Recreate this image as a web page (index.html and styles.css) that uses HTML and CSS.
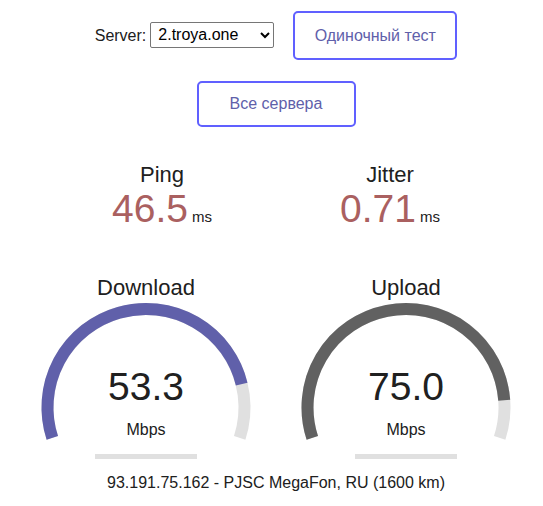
FILE: index.html
```html
<!DOCTYPE html>
<html>
<head>
<meta charset="utf-8">
<link rel="stylesheet" href="styles.css">
</head>
<body>
<div class="page">
  <div class="server-row">
    <label class="server-label">Server:</label>
    <select class="server-select"><option>2.troya.one</option></select>
    <button class="btn btn-single">Одиночный тест</button>
  </div>
  <div class="all-row">
    <button class="btn btn-all">Все сервера</button>
  </div>
  <div class="small-row">
    <div class="small-area">
      <div class="small-name">Ping</div>
      <div class="small-value"><span class="ping-num">46.5</span><span class="small-unit">ms</span></div>
    </div>
    <div class="small-area">
      <div class="small-name">Jitter</div>
      <div class="small-value"><span class="ping-num">0.71</span><span class="small-unit">ms</span></div>
    </div>
  </div>
  <div class="gauge-row">
    <div class="gauge">
      <svg class="gauge-svg" width="256" height="190" viewBox="0 0 256 190">
        <path d="M34.32 167.94 A98.5 98.5 0 1 1 221.68 167.94" fill="none" stroke="#e0e0e0" stroke-width="12"/>
        <path d="M34.32 167.94 A98.5 98.5 0 1 1 223.67 114.09" fill="none" stroke="#6060aa" stroke-width="12"/>
        <rect x="77" y="184" width="102" height="5" fill="#e0e0e0"/>
      </svg>
      <div class="gauge-name">Download</div>
      <div class="gauge-value">53.3</div>
      <div class="gauge-unit">Mbps</div>
    </div>
    <div class="gauge">
      <svg class="gauge-svg" width="256" height="190" viewBox="0 0 256 190">
        <path d="M34.32 167.94 A98.5 98.5 0 1 1 221.68 167.94" fill="none" stroke="#e0e0e0" stroke-width="12"/>
        <path d="M34.32 167.94 A98.5 98.5 0 1 1 226.23 130.2" fill="none" stroke="#616161" stroke-width="12"/>
        <rect x="77" y="184" width="102" height="5" fill="#e0e0e0"/>
      </svg>
      <div class="gauge-name">Upload</div>
      <div class="gauge-value">75.0</div>
      <div class="gauge-unit">Mbps</div>
    </div>
  </div>
  <div class="ip-info">93.191.75.162 - PJSC MegaFon, RU (1600 km)</div>
</div>
</body>
</html>
```

FILE: styles.css
```css
html, body {
  margin: 0;
  padding: 0;
  background: #ffffff;
}
body {
  font-family: "Liberation Sans", Arial, sans-serif;
  font-size: 16px;
  color: #202020;
}
.page {
  width: 534px;
  padding-left: 9px;
  display: flex;
  flex-direction: column;
  align-items: center;
}
.server-row {
  margin-top: 11px;
  display: flex;
  align-items: center;
  height: 49px;
}
.server-label {
  font-size: 16px;
  margin-right: 4px;
  margin-top: 1px;
}
.server-select {
  width: 124px;
  height: 26px;
  margin-top: -2px;
  font-family: "Liberation Sans", Arial, sans-serif;
  font-size: 16px;
  color: #000;
  border: 1px solid #767676;
  border-radius: 2px;
  background: #fff;
  padding: 0 0 0 3px;
}
.btn {
  box-sizing: border-box;
  background: #fff;
  border: 2px solid #6060ff;
  border-radius: 5px;
  color: #6060aa;
  font-family: "Liberation Sans", Arial, sans-serif;
  font-size: 16px;
  padding: 0;
}
.btn-single {
  width: 164px;
  height: 49px;
  margin-left: 19px;
}
.all-row {
  margin-top: 21px;
}
.btn-all {
  width: 159px;
  height: 46px;
  display: block;
}
.small-row {
  margin-top: 35px;
  display: flex;
  gap: 4px;
}
.small-area {
  width: 224px;
  text-align: center;
}
.small-name {
  font-size: 22px;
  line-height: 25px;
}
.small-value {
  margin-top: 2px;
  line-height: 39px;
  height: 39px;
}
.ping-num {
  font-size: 39px;
  color: #aa6060;
}
.small-unit {
  font-size: 15px;
  margin-left: 4px;
}
.gauge-row {
  margin-top: 42px;
  display: flex;
  gap: 4px;
}
.gauge {
  position: relative;
  width: 256px;
  height: 190px;
  text-align: center;
}
.gauge-svg {
  position: absolute;
  left: 0;
  top: 0;
}
.gauge-name {
  position: absolute;
  left: 0;
  right: 0;
  top: 5px;
  font-size: 22px;
  line-height: 25px;
}
.gauge-value {
  position: absolute;
  left: 0;
  right: 0;
  top: 97px;
  font-size: 39px;
  line-height: 39px;
}
.gauge-unit {
  position: absolute;
  left: 0;
  right: 0;
  top: 152px;
  font-size: 16px;
  line-height: 16px;
}
.ip-info {
  margin-top: 14px;
  font-size: 16px;
  line-height: 18px;
}
```
